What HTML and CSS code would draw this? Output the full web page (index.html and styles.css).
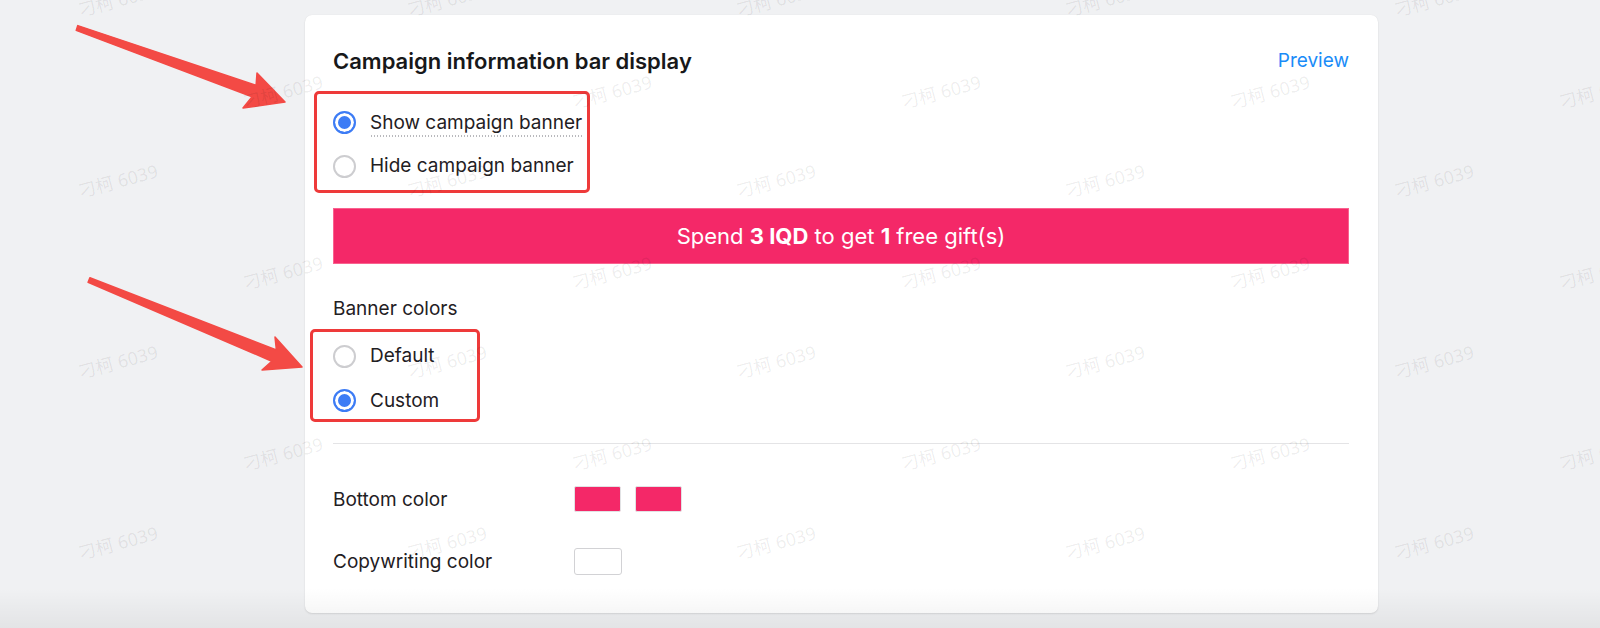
FILE: index.html
```html
<!DOCTYPE html>
<html lang="en">
<head>
<meta charset="utf-8">
<title>Campaign information bar display</title>
<link rel="stylesheet" href="styles.css">
</head>
<body>
<div class="page">
  <section class="card">
    <header class="card-head">
      <h2 class="card-title">Campaign information bar display</h2>
      <a class="preview-link" href="#">Preview</a>
    </header>

    <div class="radio-group group-display">
      <label class="radio-row">
        <span class="radio checked"></span>
        <span class="radio-label dotted">Show campaign banner</span>
      </label>
      <label class="radio-row">
        <span class="radio"></span>
        <span class="radio-label">Hide campaign banner</span>
      </label>
      <span class="mark-box mark-box-1"></span>
    </div>

    <div class="banner">Spend <b>3 IQD</b> to get <b>1</b> free gift(s)</div>

    <div class="field-title">Banner colors</div>

    <div class="radio-group group-colors">
      <label class="radio-row">
        <span class="radio"></span>
        <span class="radio-label">Default</span>
      </label>
      <label class="radio-row">
        <span class="radio checked"></span>
        <span class="radio-label">Custom</span>
      </label>
      <span class="mark-box mark-box-2"></span>
    </div>

    <hr class="divider">

    <div class="color-row first">
      <span class="color-label">Bottom color</span>
      <div class="swatches">
        <span class="swatch pink"></span>
        <span class="swatch pink"></span>
      </div>
    </div>
    <div class="color-row second">
      <span class="color-label">Copywriting color</span>
      <div class="swatches">
        <span class="swatch white"></span>
      </div>
    </div>
  </section>

  <svg class="arrows" width="1600" height="628" viewBox="0 0 1600 628" aria-hidden="true">
    <polygon class="arrow" points="77.8,25.6 256.1,85.3 257,73 285,102 243,108 252.1,96.7 76.2,30.4"/>
    <polygon class="arrow" points="89.9,277.7 276.4,350 275,337 302,367 262,370 271.8,361.2 88.1,282.3"/>
  </svg>

  <div class="watermarks" aria-hidden="true">
    <div class="wm-col"><span>刁柯 6039</span><span>刁柯 6039</span><span>刁柯 6039</span><span>刁柯 6039</span></div>
    <div class="wm-col"><span>刁柯 6039</span><span>刁柯 6039</span><span>刁柯 6039</span></div>
    <div class="wm-col"><span>刁柯 6039</span><span>刁柯 6039</span><span>刁柯 6039</span><span>刁柯 6039</span></div>
    <div class="wm-col"><span>刁柯 6039</span><span>刁柯 6039</span><span>刁柯 6039</span></div>
    <div class="wm-col"><span>刁柯 6039</span><span>刁柯 6039</span><span>刁柯 6039</span><span>刁柯 6039</span></div>
    <div class="wm-col"><span>刁柯 6039</span><span>刁柯 6039</span><span>刁柯 6039</span></div>
    <div class="wm-col"><span>刁柯 6039</span><span>刁柯 6039</span><span>刁柯 6039</span><span>刁柯 6039</span></div>
    <div class="wm-col"><span>刁柯 6039</span><span>刁柯 6039</span><span>刁柯 6039</span></div>
    <div class="wm-col"><span>刁柯 6039</span><span>刁柯 6039</span><span>刁柯 6039</span><span>刁柯 6039</span></div>
    <div class="wm-col"><span>刁柯 6039</span><span>刁柯 6039</span><span>刁柯 6039</span></div>
  </div>

  <div class="bottom-shade"></div>
</div>
</body>
</html>
```

FILE: styles.css
```css
* { box-sizing: border-box; }

html, body {
  margin: 0;
  padding: 0;
}

body {
  background: #f0f1f3;
  font-family: Inter, "Noto Sans", "Liberation Sans", sans-serif;
  color: #1f2023;
}

.page {
  position: relative;
  width: 1600px;
  height: 628px;
  overflow: hidden;
  padding: 15px 0 0 305px;
}

.card {
  width: 1073px;
  height: 598px;
  background: #fff;
  border-radius: 7px;
  box-shadow: 0 1px 2px rgba(0, 0, 0, 0.10), 0 0 1px rgba(0, 0, 0, 0.08);
  padding: 32px 29px 39px 28px;
}

.card-head {
  display: flex;
  align-items: center;
  justify-content: space-between;
  height: 28px;
}

.card-title {
  margin: 0;
  font-size: 22px;
  font-weight: 600;
  line-height: 28px;
  color: #17181a;
}

.preview-link {
  font-size: 19px;
  color: #1a8cf8;
  text-decoration: none;
  line-height: 28px;
}

.radio-group {
  position: relative;
  display: flex;
  flex-direction: column;
}

.group-display { margin-top: 25px; }
.group-colors { margin-top: 10px; }

.radio-row {
  display: flex;
  align-items: center;
  gap: 14px;
  height: 44px;
  font-size: 19px;
  color: #1f2023;
}

.group-colors .radio-row { height: 45px; }
.group-colors .radio-row:first-child { height: 44px; margin-top: 1px; }

.radio {
  width: 23px;
  height: 23px;
  border-radius: 50%;
  border: 2px solid #cdcdd0;
  background: #fff;
  flex: none;
}

.radio.checked {
  border-color: #3d7cf5;
  background: #3d7cf5;
  box-shadow: inset 0 0 0 3px #fff;
}

.radio-label { line-height: 24px; }

.radio-label.dotted {
  background-image: radial-gradient(circle, #b9b9bd 0.8px, transparent 1px);
  background-size: 3px 2px;
  background-repeat: repeat-x;
  background-position: 0 100%;
  padding-bottom: 2px;
  margin-top: 3px;
}

.mark-box {
  position: absolute;
  border: 3px solid #ee3a3a;
  border-radius: 5px;
  pointer-events: none;
}

.mark-box-1 {
  left: -19px;
  top: -9px;
  width: 276px;
  height: 102px;
}

.mark-box-2 {
  left: -23px;
  top: -4px;
  width: 170px;
  height: 93px;
}

.banner {
  margin-top: 20px;
  height: 56px;
  background: #f42868;
  border: 1px solid #f9628f;
  color: #fff;
  font-size: 22px;
  line-height: 54px;
  text-align: center;
}

.banner b { font-weight: 700; }

.field-title {
  margin-top: 31px;
  font-size: 19px;
  line-height: 28px;
  color: #1f2023;
}

.divider {
  margin: 20px 0 0;
  border: 0;
  border-top: 1px solid #e4e4e6;
  height: 0;
}

.color-row {
  display: grid;
  grid-template-columns: 241px auto;
  align-items: center;
  height: 26px;
  font-size: 19px;
  color: #1f2023;
}

.color-row.first { margin-top: 42px; }
.color-row.second { margin-top: 36px; height: 27px; }

.swatches {
  display: flex;
  gap: 14px;
}

.swatch {
  display: block;
  width: 47px;
  height: 26px;
  border-radius: 2px;
  border: 1px solid #dcdcde;
}

.swatch.pink {
  background: #f42868;
  border-color: #e2e2e4;
}

.swatch.white {
  width: 48px;
  height: 27px;
  background: #fff;
  border-color: #d2d2d5;
  border-radius: 3px;
}

.arrows {
  position: absolute;
  left: 0;
  top: 0;
  pointer-events: none;
}

.arrow {
  fill: #f34a45;
  stroke: #f34a45;
  stroke-width: 1.5;
  stroke-linejoin: round;
}

.watermarks {
  position: absolute;
  inset: 0;
  display: flex;
  align-items: flex-start;
  padding-left: 77px;
  pointer-events: none;
  overflow: hidden;
}

.wm-col {
  width: 164.5px;
  flex: none;
  display: flex;
  flex-direction: column;
  margin-top: -10px;
}

.wm-col:nth-child(even) { margin-top: 82px; }

.wm-col span {
  display: block;
  flex: none;
  height: 181px;
  line-height: 20px;
  font-family: "Noto Sans", "Noto Sans CJK SC", sans-serif;
  font-size: 18px;
  color: rgba(0, 0, 0, 0.075);
  white-space: nowrap;
  transform: rotate(-15deg);
  transform-origin: 40px 10px;
}

.bottom-shade {
  position: absolute;
  left: 0;
  right: 0;
  bottom: 0;
  height: 40px;
  background: linear-gradient(to bottom, rgba(0, 0, 0, 0), rgba(0, 0, 0, 0.055));
  pointer-events: none;
}
```
